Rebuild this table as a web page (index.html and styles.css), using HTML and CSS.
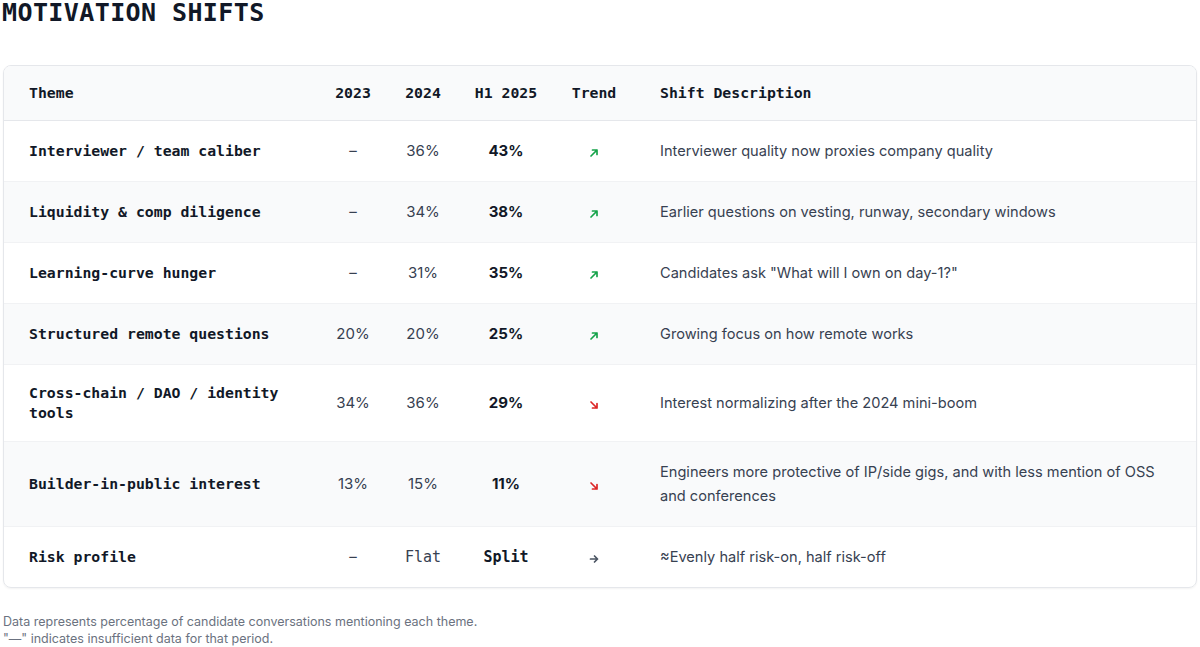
FILE: index.html
```html
<!DOCTYPE html>
<html lang="en">
<head>
<meta charset="utf-8">
<title>Motivation Shifts</title>
<link rel="stylesheet" href="styles.css">
</head>
<body>
<h1 class="title">MOTIVATION SHIFTS</h1>
<div class="card">
  <table class="shifts">
    <colgroup>
      <col class="c-theme"><col class="c-num"><col class="c-num"><col class="c-h1"><col class="c-trend"><col class="c-desc">
    </colgroup>
    <thead>
      <tr>
        <th class="th-theme">Theme</th>
        <th>2023</th>
        <th>2024</th>
        <th>H1 2025</th>
        <th>Trend</th>
        <th class="th-desc">Shift Description</th>
      </tr>
    </thead>
    <tbody>
      <tr>
        <td class="theme">Interviewer / team caliber</td>
        <td class="num">–</td>
        <td class="num">36%</td>
        <td class="num strong">43%</td>
        <td class="trend"><svg class="arrow up" viewBox="0 0 10 10"><path d="M2 8 L8 2 M3.5 2 H8 V6.5"/></svg></td>
        <td class="desc">Interviewer quality now proxies company quality</td>
      </tr>
      <tr class="alt">
        <td class="theme">Liquidity &amp; comp diligence</td>
        <td class="num">–</td>
        <td class="num">34%</td>
        <td class="num strong">38%</td>
        <td class="trend"><svg class="arrow up" viewBox="0 0 10 10"><path d="M2 8 L8 2 M3.5 2 H8 V6.5"/></svg></td>
        <td class="desc">Earlier questions on vesting, runway, secondary windows</td>
      </tr>
      <tr>
        <td class="theme">Learning-curve hunger</td>
        <td class="num">–</td>
        <td class="num">31%</td>
        <td class="num strong">35%</td>
        <td class="trend"><svg class="arrow up" viewBox="0 0 10 10"><path d="M2 8 L8 2 M3.5 2 H8 V6.5"/></svg></td>
        <td class="desc">Candidates ask "What will I own on day-1?"</td>
      </tr>
      <tr class="alt">
        <td class="theme">Structured remote questions</td>
        <td class="num">20%</td>
        <td class="num">20%</td>
        <td class="num strong">25%</td>
        <td class="trend"><svg class="arrow up" viewBox="0 0 10 10"><path d="M2 8 L8 2 M3.5 2 H8 V6.5"/></svg></td>
        <td class="desc">Growing focus on how remote works</td>
      </tr>
      <tr>
        <td class="theme">Cross-chain / DAO / identity tools</td>
        <td class="num">34%</td>
        <td class="num">36%</td>
        <td class="num strong">29%</td>
        <td class="trend"><svg class="arrow down" viewBox="0 0 10 10"><path d="M2 2 L8 8 M3.5 8 H8 V3.5"/></svg></td>
        <td class="desc">Interest normalizing after the 2024 mini-boom</td>
      </tr>
      <tr class="alt">
        <td class="theme">Builder-in-public interest</td>
        <td class="num">13%</td>
        <td class="num">15%</td>
        <td class="num strong">11%</td>
        <td class="trend"><svg class="arrow down" viewBox="0 0 10 10"><path d="M2 2 L8 8 M3.5 8 H8 V3.5"/></svg></td>
        <td class="desc">Engineers more protective of IP/side gigs, and with less mention of OSS and conferences</td>
      </tr>
      <tr>
        <td class="theme">Risk profile</td>
        <td class="num">–</td>
        <td class="num mono">Flat</td>
        <td class="num mono strong">Split</td>
        <td class="trend"><svg class="arrow flat" viewBox="0 0 10 10"><path d="M1.5 5 H8.5 M5.5 2 L8.5 5 L5.5 8"/></svg></td>
        <td class="desc">≈Evenly half risk-on, half risk-off</td>
      </tr>
    </tbody>
  </table>
</div>
<p class="note">Data represents percentage of candidate conversations mentioning each theme.<br>"—" indicates insufficient data for that period.</p>
</body>
</html>
```

FILE: styles.css
```css
html, body {
  margin: 0;
  padding: 0;
  background: #ffffff;
}
body {
  padding: 0 3px;
  font-family: Inter, "Noto Sans", sans-serif;
  color: #111827;
}
.title {
  margin: 0 0 0 -1px;
  font-family: "DejaVu Sans Mono", "Liberation Mono", monospace;
  font-weight: 700;
  font-size: 25px;
  line-height: 25px;
  letter-spacing: 0.4px;
  color: #111827;
}
.card {
  margin-top: 40px;
  border: 1px solid #e5e7eb;
  border-radius: 8px;
  overflow: hidden;
  box-shadow: 0 1px 2px rgba(0, 0, 0, 0.05);
}
.shifts {
  width: 100%;
  border-collapse: collapse;
  table-layout: fixed;
}
.c-theme { width: 314px; }
.c-num { width: 70px; }
.c-h1 { width: 96px; }
.c-trend { width: 80px; }
.c-desc { width: auto; }

.shifts th {
  background: #f9fafb;
  font-family: "DejaVu Sans Mono", "Liberation Mono", monospace;
  font-weight: 700;
  font-size: 14.8px;
  line-height: 20px;
  color: #111827;
  padding: 17px 0;
  text-align: center;
  border-bottom: 1px solid #e5e7eb;
  white-space: nowrap;
}
.shifts th.th-theme { text-align: left; padding-left: 25px; }
.shifts th.th-desc { text-align: left; padding-left: 26px; }

.shifts td {
  padding: 18px 0;
  vertical-align: middle;
  text-align: center;
  border-bottom: 1px solid #f1f2f4;
}
.shifts tbody tr:last-child td { border-bottom: none; }
.shifts tr.alt td { background: #f9fafb; }

.shifts td.theme {
  text-align: left;
  padding-left: 25px;
  padding-right: 16px;
  font-family: "DejaVu Sans Mono", "Liberation Mono", monospace;
  font-weight: 700;
  font-size: 14.8px;
  line-height: 20px;
  color: #111827;
}
.shifts td.num {
  font-family: Inter, "Noto Sans", sans-serif;
  font-size: 15px;
  line-height: 24px;
  color: #374151;
}
.shifts td.num.strong {
  font-weight: 700;
  color: #111827;
}
.shifts td.num.mono {
  font-family: "DejaVu Sans Mono", "Liberation Mono", monospace;
  font-size: 15px;
}
.shifts td.trend {
  line-height: 24px;
}
.arrow {
  width: 10px;
  height: 10px;
  display: inline-block;
  vertical-align: middle;
  fill: none;
  stroke-width: 1.7;
  stroke-linecap: round;
  stroke-linejoin: round;
}
.arrow.up { stroke: #16a34a; }
.arrow.down { stroke: #dc2626; }
.arrow.flat { stroke: #4b5563; }

.shifts td.desc {
  text-align: left;
  padding-left: 26px;
  padding-right: 24px;
  font-family: Inter, "Noto Sans", sans-serif;
  font-size: 14.6px;
  line-height: 24px;
  color: #374151;
}
.note {
  margin: 25px 0 0;
  font-family: Inter, "Noto Sans", sans-serif;
  font-size: 12.5px;
  line-height: 17px;
  color: #6b7280;
}
```
